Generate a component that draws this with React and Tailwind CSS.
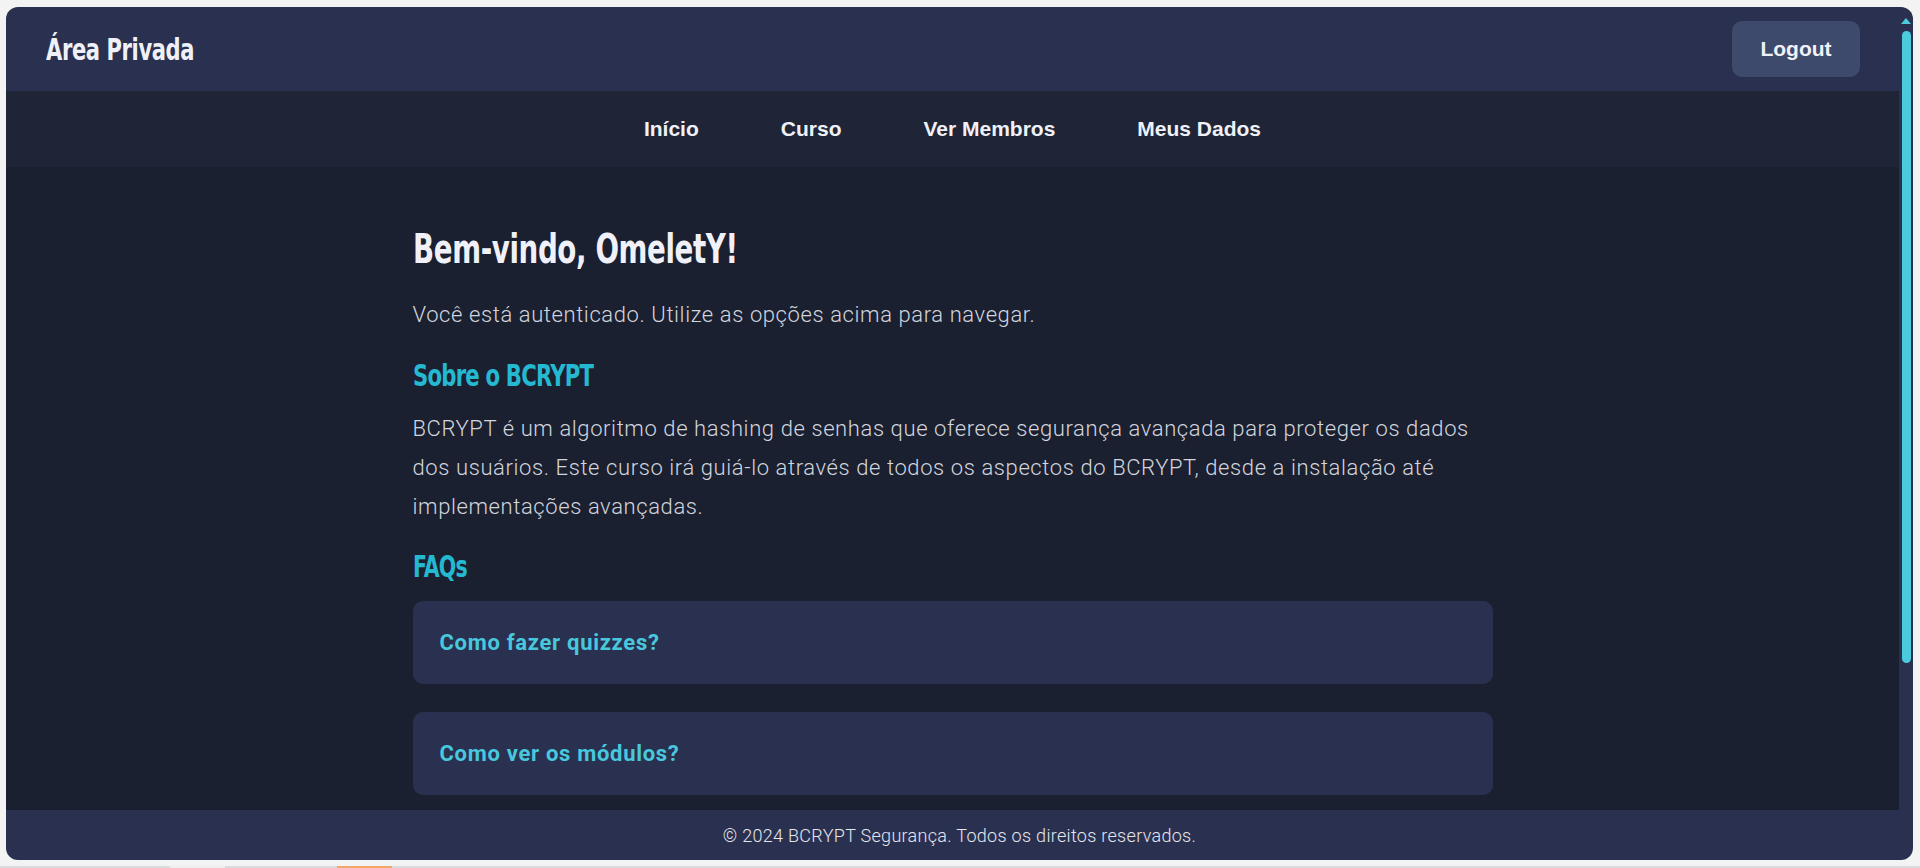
import React from "react";

const navLinks = ["Início", "Curso", "Ver Membros", "Meus Dados"];

const faqs = ["Como fazer quizzes?", "Como ver os módulos?"];

const condensed = {
  fontFamily: '"DejaVu Sans Condensed", "Roboto Condensed", Roboto, sans-serif',
};

const App = () => {
  return (
    <div className="h-[868px] w-[1920px] bg-[#f3f3f3] flex flex-col overflow-hidden">
      <div className="pt-[7px] pl-[6px] pr-[7px]">
        <div className="h-[853px] rounded-[12px] bg-[#2a3150] overflow-hidden flex flex-col">
          <div className="flex flex-1 min-h-0">
            <div className="flex-1 flex flex-col min-w-0">
              {/* header */}
              <header className="h-[84px] shrink-0 flex items-center justify-between px-10">
                <h1
                  className="inline-block origin-left scale-x-[0.78] text-[30px] font-bold text-[#f0f1f8] tracking-[-0.5px]"
                  style={condensed}
                >
                  Área Privada
                </h1>
                <button className="h-[56px] w-[128px] rounded-[10px] bg-[#3e4a6b] text-[#f0f1f8] text-[21px] font-bold font-['Liberation_Sans',Arial,sans-serif] mr-[-1px]">
                  Logout
                </button>
              </header>

              {/* nav */}
              <nav className="h-[76px] shrink-0 bg-[#1f2536] flex items-center justify-center gap-[82px]">
                {navLinks.map((link) => (
                  <a
                    key={link}
                    href="#"
                    className="text-[21px] font-bold text-[#f0f1f8] font-['Liberation_Sans',Arial,sans-serif]"
                  >
                    {link}
                  </a>
                ))}
              </nav>

              {/* main */}
              <main className="flex-1 bg-[#1b2030] font-['Roboto',sans-serif]">
                <div className="max-w-[1080px] mx-auto pt-[58px]">
                  <h2
                    className="inline-block origin-left scale-x-[0.77] text-[40px] leading-[48px] font-bold text-[#f0f1f8] tracking-[-0.5px]"
                    style={condensed}
                  >
                    Bem-vindo, OmeletY!
                  </h2>
                  <p className="mt-[23px] text-[22px] leading-[38px] font-light text-[#d2d5de] tracking-[0.6px]">
                    Você está autenticado. Utilize as opções acima para navegar.
                  </p>
                  <div className="mt-[24px]">
                    <h3
                      className="inline-block origin-left scale-x-[0.785] text-[30px] leading-[36px] font-bold text-[#25b9d1] tracking-[-1px]"
                      style={condensed}
                    >
                      Sobre o BCRYPT
                    </h3>
                  </div>
                  <p className="mt-[15px] text-[22px] leading-[39px] font-light text-[#d2d5de] tracking-[0.6px]">
                    BCRYPT é um algoritmo de hashing de senhas que oferece segurança avançada para proteger os dados dos usuários. Este curso irá guiá-lo através de todos os aspectos do BCRYPT, desde a instalação até implementações avançadas.
                  </p>
                  <div className="mt-[23px]">
                    <h3
                      className="inline-block origin-left scale-x-[0.76] text-[30px] leading-[36px] font-bold text-[#25b9d1] tracking-[-1px]"
                      style={condensed}
                    >
                      FAQs
                    </h3>
                  </div>
                  <div className="mt-[16px] flex flex-col gap-[28px]">
                    {faqs.map((q) => (
                      <div
                        key={q}
                        className="h-[83px] rounded-[10px] bg-[#2a3150] flex items-center px-[27px]"
                      >
                        <span className="text-[22px] font-bold text-[#48c8dc] tracking-[0.7px]">{q}</span>
                      </div>
                    ))}
                  </div>
                </div>
              </main>
            </div>

            {/* scrollbar */}
            <div className="w-[14px] shrink-0 flex flex-col items-center pt-[11px]">
              <div className="w-0 h-0 border-l-[5px] border-r-[5px] border-b-[6px] border-l-transparent border-r-transparent border-b-[#4ccbdd]" />
              <div className="mt-[7px] w-[9px] h-[632px] rounded-full bg-[#4ccbdd]" />
            </div>
          </div>

          {/* footer */}
          <footer className="h-[50px] shrink-0 flex items-center justify-center font-['Roboto',sans-serif] text-[18px] font-light text-[#e4e6ee] tracking-[0.3px]">
            © 2024 BCRYPT Segurança. Todos os direitos reservados.
          </footer>
        </div>
      </div>
      <div className="mt-[6px] h-[2px] flex">
        <div className="w-[170px] bg-[#d9dcdc]" />
        <div className="w-[55px] bg-[#eeeeee]" />
        <div className="w-[112px] bg-[#d9dcdc]" />
        <div className="w-[55px] bg-[#f2a86a]" />
        <div className="flex-1 bg-[#d9dcdc]" />
      </div>
    </div>
  );
};

export default App;
